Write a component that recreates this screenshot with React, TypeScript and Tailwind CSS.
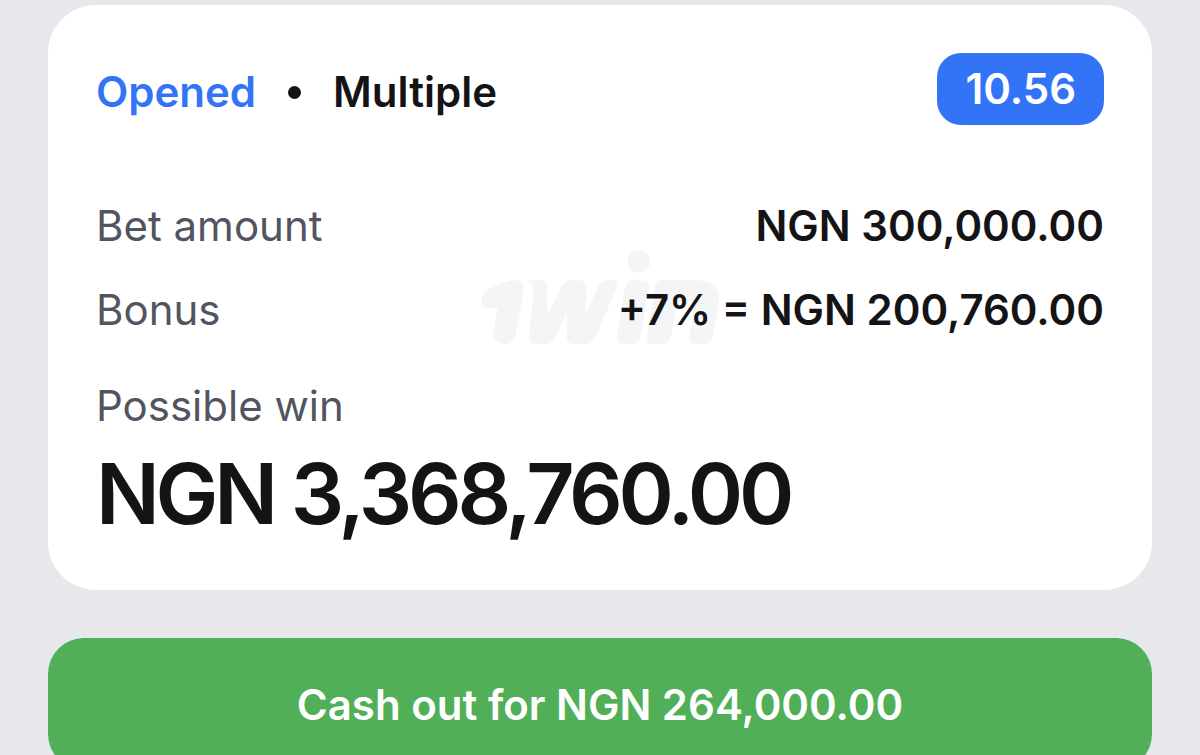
export default function App() {
  return (
    <main className="min-h-screen overflow-hidden bg-[#e7e8ec] px-12 pt-[5px] font-['Inter',sans-serif] text-[#141416]">
      <section className="relative isolate rounded-[48px] bg-white px-12 pt-12 pb-11">
        <svg
          className="absolute top-[245px] left-1/2 -z-10 h-[96px] w-[240px] -translate-x-1/2"
          viewBox="30 30 720 288"
          fill="#f5f5f5"
          aria-hidden="true"
        >
          <path d="M34 182Q34 160 52 150L96 129Q116 121 134 121Q165 122 161 152L138 282Q132 312 104 312Q68 310 70 278L83 204Q45 210 36 192Z" />
          <path d="M172 121H208Q233 121 232 142V226L274 142Q284 121 304 121H326Q350 121 349 142L346 226L384 140Q392 121 410 121H426Q450 121 441 142L376 291Q367 312 346 312H312Q290 312 290 291L292 215L256 291Q247 312 228 312H198Q176 312 177 288L190 160Q190 130 172 121Z" />
          <circle cx="506" cy="64" r="34" />
          <path d="M488 121H516Q541 121 537 144L511 288Q507 312 484 312H459Q437 312 441 288L465 144Q469 121 488 121Z" />
          <path d="M570 121H676Q754 121 747 190L728 288Q724 312 702 312H678Q654 312 658 288L673 204Q676 184 656 184H634Q622 184 619 200L603 288Q599 312 576 312H551Q527 312 531 288L555 142Q558 121 570 121Z" />
        </svg>
        <header className="flex items-start justify-between">
          <div className="flex items-center gap-8 pt-[11px] text-[42px] leading-[56px] font-semibold">
            <span className="text-[#3374f6]">Opened</span>
            <span className="size-[13px] rounded-full bg-[#141416]" />
            <span>Multiple</span>
          </div>
          <span className="rounded-3xl bg-[#3374f6] px-7 text-[42px] leading-[72px] font-semibold text-white">10.56</span>
        </header>
        <dl className="mt-[73px] text-[42px] leading-[56px]">
          <div className="flex justify-between">
            <dt className="text-[#52555f]">Bet amount</dt>
            <dd className="font-semibold">NGN 300,000.00</dd>
          </div>
          <div className="mt-7 flex justify-between">
            <dt className="text-[#52555f]">Bonus</dt>
            <dd className="font-semibold">+7% = NGN 200,760.00</dd>
          </div>
          <div className="mt-10">
            <dt className="text-[#52555f]">Possible win</dt>
            <dd className="mt-2 text-[84px] leading-[104px] font-semibold tracking-tighter">NGN 3,368,760.00</dd>
          </div>
        </dl>
      </section>
      <button type="button" className="mt-12 h-[132px] w-full rounded-[36px] bg-[#50af57] text-[42px] font-semibold text-white">
        Cash out for NGN 264,000.00
      </button>
    </main>
  );
}
